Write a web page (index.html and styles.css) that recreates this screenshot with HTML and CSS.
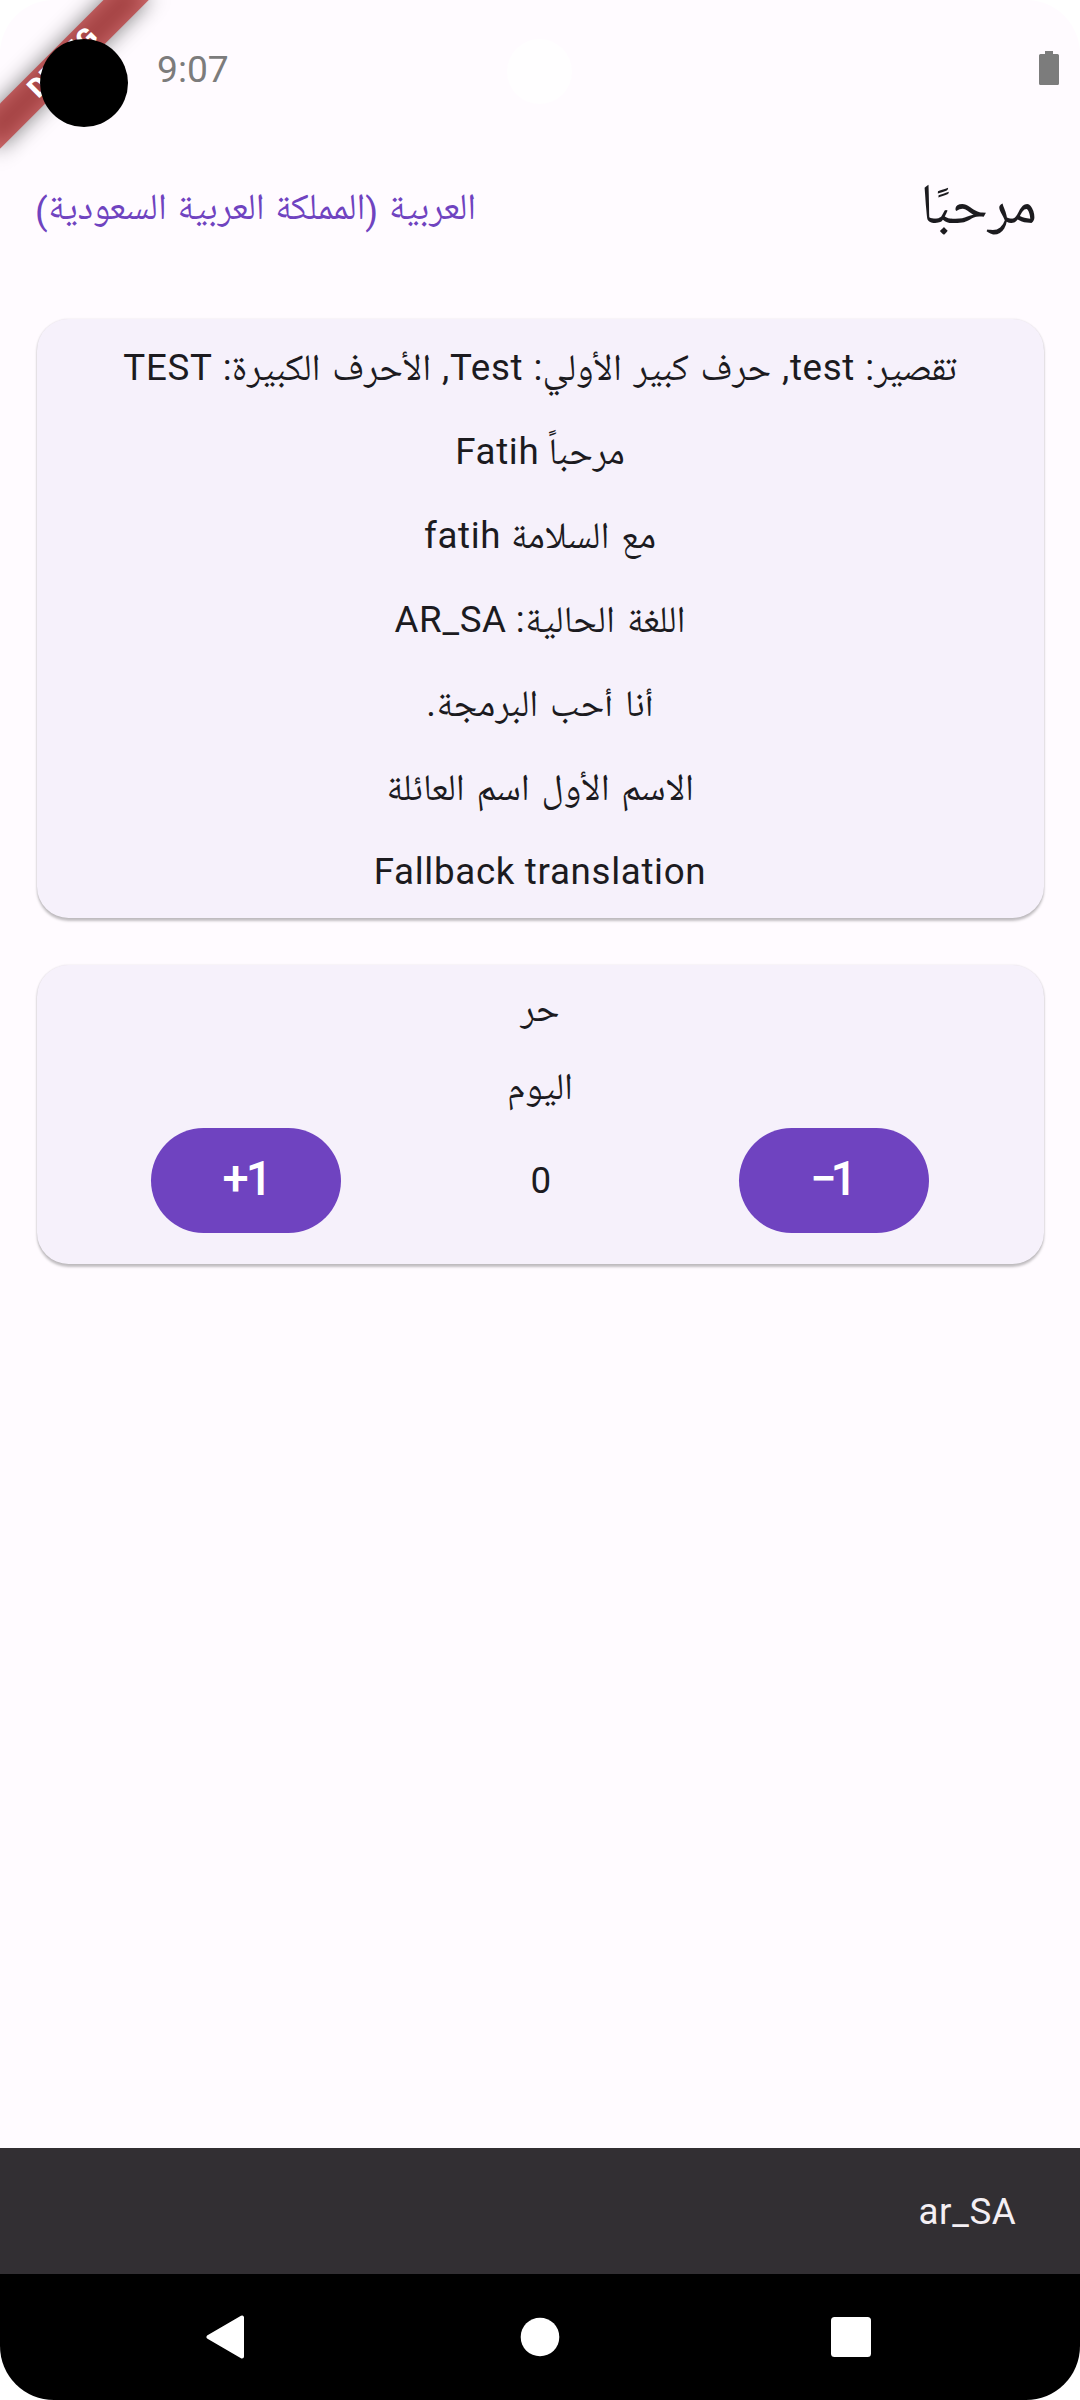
FILE: index.html
```
<!DOCTYPE html>
<html lang="ar" dir="rtl">
<head>
<meta charset="utf-8">
<title>مرحبًا</title>
<link rel="stylesheet" href="styles.css">
</head>
<body>
<div class="screen">
  <div class="debug-banner" dir="ltr"><span class="debug-label">DEBUG</span></div>
  <div class="camera-ring"></div>
  <div class="camera"></div>
  <header class="status-bar" dir="ltr">
    <span class="clock">9:07</span>
    <svg class="battery" width="20" height="34" viewBox="0 0 20 34"><path d="M6 0h8v3h4.500a1.500 1.500 0 0 1 1.500 1.500v28a1.500 1.500 0 0 1-1.500 1.500h-17a1.500 1.500 0 0 1-1.500-1.500v-28a1.500 1.500 0 0 1 1.500-1.500h4.500z" fill="#7c7c7c"/></svg>
  </header>
  <div class="app-bar">
    <h1 class="title">مرحبًا</h1>
    <span class="locale">العربية (المملكة العربية السعودية)</span>
  </div>
  <main class="content">
    <section class="card messages">
      <p class="line"><span class="ar">تقصير</span>: test, <span class="ar">حرف كبير الأولي</span>: Test, <span class="ar">الأحرف الكبيرة</span>: TEST</p>
      <p class="line"><span class="ar">مرحباً</span> Fatih</p>
      <p class="line"><span class="ar">مع السلامة</span> fatih</p>
      <p class="line"><span class="ar">اللغة الحالية</span>: AR_SA</p>
      <p class="line"><span class="ar">أنا أحب البرمجة</span>.</p>
      <p class="line"><span class="ar">الاسم الأول اسم العائلة</span></p>
      <p class="line">Fallback translation</p>
    </section>
    <section class="card counter">
      <p class="line"><span class="ar">حر</span></p>
      <p class="line"><span class="ar">اليوم</span></p>
      <div class="controls">
        <button class="pill minus" dir="ltr">−1</button>
        <span class="count">0</span>
        <button class="pill plus" dir="ltr">+1</button>
      </div>
    </section>
  </main>
  <div class="snackbar"><bdi>ar_SA</bdi></div>
  <nav class="nav-bar" dir="ltr">
    <svg width="40" height="44" viewBox="0 0 40 44"><path d="M3.500 22L37 2.500V41.500Z" fill="#fff" stroke="#fff" stroke-width="4" stroke-linejoin="round"/></svg>
    <svg class="home" width="40" height="40" viewBox="0 0 40 40"><circle cx="20" cy="20" r="19.300" fill="#fff"/></svg>
    <svg width="40" height="40" viewBox="0 0 40 40"><rect width="40" height="40" rx="3.500" fill="#fff"/></svg>
  </nav>
</div>
</body>
</html>
```
FILE: styles.css
```
* { box-sizing: border-box; }

body {
  margin: 0;
  background: #fff;
  font-family: Roboto, "Noto Naskh Arabic UI", "Noto Naskh Arabic", "Noto Sans Arabic", "DejaVu Sans", sans-serif;
  font-size: 36.75px;
  letter-spacing: 0.66px;
  color: #1c1b1f;
}

.screen {
  position: relative;
  display: flex;
  flex-direction: column;
  width: 1080px;
  height: 2400px;
  overflow: hidden;
  border-radius: 54px;
  background: #fffbff;
}

/* Diagonal ribbon over the top-left corner */
.debug-banner {
  position: absolute;
  left: -42px;
  top: 47px;
  width: 210px;
  height: 31.5px;
  transform: rotate(-45deg);
  display: flex;
  align-items: center;
  justify-content: center;
}

.debug-banner::before,
.debug-banner::after {
  content: "";
  position: absolute;
  inset: 0;
}

.debug-banner::before {
  background: rgba(0, 0, 0, 0.5);
  filter: blur(10.4px);
}

.debug-banner::after { background: rgba(183, 28, 28, 0.627); }

.debug-label {
  position: relative;
  z-index: 1;
  font-size: 26.8px;
  font-weight: 900;
  line-height: 1;
  letter-spacing: 0;
  color: #fff;
}

.camera-ring,
.camera {
  position: absolute;
  border-radius: 50%;
}

.camera-ring {
  left: 507px;
  top: 39px;
  width: 65px;
  height: 65px;
  background: #fffeff;
}

.camera {
  left: 40px;
  top: 39px;
  width: 88px;
  height: 88px;
  background: #000;
}

.status-bar {
  display: flex;
  align-items: center;
  justify-content: space-between;
  height: 136px;
  padding: 0 21px 0 157px;
}

.clock {
  padding-top: 2px;
  line-height: 136px;
  font-size: 37.2px;
  letter-spacing: 0;
  color: #7c7c7c;
}

.app-bar {
  display: flex;
  align-items: center;
  justify-content: space-between;
  height: 147px;
  padding: 0 43px 0 35px;
}

.title {
  margin: 0;
  padding-bottom: 2px;
  font-size: 57.2px;
  font-weight: 400;
  letter-spacing: 0;
}

.locale {
  font-size: 37px;
  word-spacing: 1px;
  color: #6f43c0;
}

.content {
  flex: 1;
  display: flex;
  flex-direction: column;
  gap: 47px;
  padding: 36px 36.5px 0;
}

.card {
  border-radius: 31.5px;
  background: #f6f1fb;
  box-shadow: 0 2.6px 2.6px rgba(0, 0, 0, 0.24), 0 0 2px rgba(0, 0, 0, 0.1);
}

.line {
  margin: 0;
  text-align: center;
  white-space: nowrap;
}

/* Naskh sits higher than the Latin baseline */
.ar {
  font-size: 37.4px;
  line-height: 1;
  word-spacing: 2.5px;
  vertical-align: -4.5px;
}

.messages {
  height: 599px;
  padding-top: 7px;
}

.messages .line { line-height: 84px; }

.messages .line:first-child { word-spacing: 1.2px; }

.counter {
  height: 299px;
  padding-top: 5px;
}

.counter .line { line-height: 78px; }

.controls {
  display: flex;
  align-items: center;
  justify-content: space-between;
  padding: 2px 115px 0 114.5px;
}

.count { padding-left: 3px; }

.pill {
  width: 190px;
  height: 105px;
  padding: 0 0 4px;
  border: 0;
  border-radius: 52.5px;
  background: #6f43c0;
  color: #fff;
  font-family: inherit;
  font-size: 47.25px;
  font-weight: 500;
}

.plus { letter-spacing: -3px; }

.minus {
  padding-right: 5.6px;
  letter-spacing: -6.2px;
}

.snackbar {
  height: 126px;
  padding: 0 63.5px;
  line-height: 127px;
  background: #322f33;
  color: #f4eff4;
}

.nav-bar {
  display: flex;
  align-items: center;
  justify-content: space-between;
  height: 126px;
  padding: 0 209px 0 205px;
  background: #000;
}

.home { margin-left: 4px; }
```
